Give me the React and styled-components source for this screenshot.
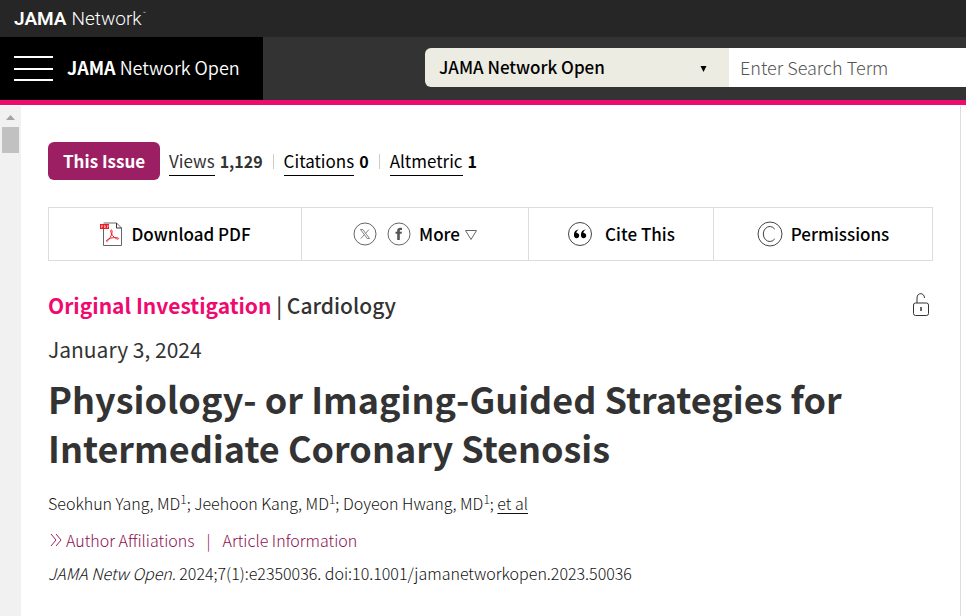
import styled, { createGlobalStyle } from 'styled-components';

const GlobalStyle = createGlobalStyle`
  *,
  *::before,
  *::after {
    box-sizing: border-box;
  }

  body {
    margin: 0;
    background-color: #fff;
    color: #333;
    font-family: 'Noto Sans CJK SC', 'Open Sans', sans-serif;
    font-size: 17px;
  }

  button,
  input,
  select {
    font-family: inherit;
  }

  a {
    color: inherit;
    text-decoration: none;
  }
`;

const Page = styled.div`
  min-height: 100vh;
  display: flex;
  flex-direction: column;
`;

const TopBar = styled.div`
  height: 37px;
  padding: 0 14px;
  display: flex;
  align-items: center;
  background-color: #262626;
`;

const Logo = styled.a`
  display: flex;
  align-items: flex-start;
  gap: 5px;
  color: #fff;
  font-family: Roboto, Arial, sans-serif;
  font-size: 19px;
  font-weight: 300;
  line-height: 22px;

  & b {
    font-weight: 600;
  }

  & small {
    margin-left: -4px;
    font-size: 5px;
    line-height: 10px;
  }
`;

const NavBar = styled.header`
  display: flex;
  height: 68px;
  background-color: #333;
  border-bottom: 5px solid #ef0a6f;
`;

const Brand = styled.div`
  flex: 0 0 263px;
  display: flex;
  align-items: center;
  gap: 14px;
  padding: 0 14px;
  background-color: #000;
  color: #fff;
  font-size: 18px;
`;

const BrandLink = styled.a`
  padding-bottom: 4px;
  font-weight: 350;

  & b {
    font-weight: 700;
  }
`;

const MenuButton = styled.button`
  display: flex;
  flex-direction: column;
  justify-content: space-between;
  width: 39px;
  height: 25px;
  padding: 0;
  border: none;
  background: none;
  cursor: pointer;

  & span {
    height: 2px;
    background-color: #fff;
  }
`;

const Search = styled.form`
  flex: 1;
  display: flex;
  align-items: center;
  margin-left: 162px;
  padding-bottom: 2px;
`;

const SelectBox = styled.div`
  flex: 0 0 304px;
  display: grid;
  align-items: center;
  height: 39px;
  border-radius: 6px 0 0 6px;
  background-color: #edece2;

  & > * {
    grid-area: 1 / 1;
  }

  & svg {
    justify-self: end;
    margin: 3px 22px 0 0;
    pointer-events: none;
  }
`;

const Select = styled.select`
  width: 100%;
  height: 39px;
  padding: 0 14px 2px;
  appearance: none;
  border: none;
  background: none;
  color: #000;
  font-size: 17px;
  font-weight: 500;
`;

const SearchInput = styled.input`
  flex: 1;
  min-width: 0;
  height: 39px;
  padding: 0 11px 2px;
  border: none;
  border-radius: 0;
  background-color: #fff;
  font-size: 18px;
  font-weight: 300;

  &::placeholder {
    color: #555;
    opacity: 1;
  }
`;

const Body = styled.div`
  flex: 1;
  display: flex;
  padding: 1px 5px 0 0;
`;

const ScrollTrack = styled.div`
  flex: 0 0 21px;
  display: flex;
  flex-direction: column;
  align-items: center;
  gap: 7px;
  padding-top: 9px;
  background-color: #f1f1f1;
`;

const ScrollThumb = styled.div`
  width: 17px;
  height: 26px;
  background-color: #c1c1c1;
`;

const Article = styled.main`
  flex: 1;
  min-width: 0;
  padding: 36px 27px 0;
  border-right: 1px solid #dcdcdc;
`;

const Metrics = styled.div`
  display: flex;
  align-items: center;
  color: #000;
`;

const IssueButton = styled.button`
  height: 38px;
  margin-right: 9px;
  padding: 0 15px 2px;
  border: none;
  border-radius: 6px;
  background-color: #9d1f63;
  color: #fff;
  font-size: 17px;
  font-weight: 700;
  cursor: pointer;
`;

const Metric = styled.span`
  display: flex;
  gap: 5px;
  line-height: 28px;
  color: ${(props) => props.$color || '#000'};

  & a {
    border-bottom: 1px solid #000;
  }

  & b {
    font-size: 16px;
  }
`;

const Divider = styled.span`
  width: 1px;
  height: 15px;
  margin: 0 10px;
  background-color: #ccc;
`;

const Tools = styled.nav`
  display: grid;
  grid-template-columns: 252fr 227fr 185fr 219fr;
  height: 54px;
  margin-top: 27px;
  border: 1px solid #dcdcdc;
`;

const Tool = styled.div`
  display: flex;
  align-items: center;
  justify-content: center;
  gap: 8px;
  color: #000;
  font-weight: 500;

  & + & {
    border-left: 1px solid #dcdcdc;
  }
`;

const SocialLinks = styled.div`
  display: flex;
  gap: 10px;
`;

const ToolLink = styled.a`
  display: flex;
  align-items: center;
  gap: ${(props) => props.$gap || 8}px;

  & span {
    padding-bottom: 2px;
  }
`;

const TypeRow = styled.div`
  display: flex;
  justify-content: space-between;
  align-items: center;
  margin-top: 28px;
  padding-right: 3px;
`;

const ArticleType = styled.div`
  font-size: 21px;
  line-height: 32px;
  font-weight: 500;

  & strong {
    color: #ef0a6f;
    font-weight: 700;
  }
`;

const PubDate = styled.p`
  margin: 12px 0 0;
  font-size: 21px;
  line-height: 32px;
`;

const Title = styled.h1`
  margin: 9px 0 0;
  font-size: 36px;
  line-height: 49px;
  font-weight: 700;
`;

const Authors = styled.p`
  margin: 19px 0 0;
  color: #111;
  font-size: 16px;
  font-weight: 300;
  line-height: 24px;

  & sup {
    font-size: 12px;
    line-height: 0;
  }

  & a {
    text-decoration: underline;
    text-underline-offset: 3px;
  }
`;

const InfoLinks = styled.div`
  display: flex;
  align-items: center;
  gap: 12px;
  margin-top: 13px;
  font-size: 16px;
  font-weight: 300;
  line-height: 24px;
  color: #8c0f52;

  & a {
    display: flex;
    align-items: center;
    gap: 3px;
  }
`;

const Citation = styled.p`
  margin: 9px 0 0;
  color: #111;
  font-size: 16px;
  font-weight: 300;
  line-height: 24px;
`;

const PdfIcon = () => (
  <svg width="24" height="24" viewBox="0 0 24 24" fill="none">
    <path d="M4.5 6v17.5h18V6l-5-5h-13" stroke="#666" />
    <path d="M17.5 1v5h5" stroke="#333" />
    <rect x="1" y="2" width="9" height="5" fill="#ed1c24" />
    <path
      d="M2.5 6V3.5h1v1h-1M5.5 6V3.5h.5l.5.5v1.5h-1M8.5 6V3.5h1M8.5 4.5h1"
      stroke="#fff"
      strokeWidth=".5"
    />
    <path
      d="M12.5 8c1 0 .7 2.500.2 4-.7 2.300-2.200 5-3.700 6.600-.8.900-1.900 1-1.500 0 .6-1.500 4.500-3 8.500-3 2.500 0 4 .5 3.500 1.200-.7.900-3-.3-4.500-1.700-1.800-1.700-3.300-4.600-3.300-6.100 0-.6.300-1 .8-1z"
      stroke="#ed1c24"
    />
  </svg>
);

const XIcon = () => (
  <svg width="24" height="24" viewBox="0 0 24 24" fill="none" stroke="#666">
    <circle cx="12" cy="12" r="11" />
    <path
      d="M7.5 7.5h2.300l6.700 9h-2.300zM16 7.500l-3.500 3.800M7.800 16.500l3.600-4"
      strokeWidth=".8"
    />
  </svg>
);

const FacebookIcon = () => (
  <svg width="24" height="24" viewBox="0 0 24 24">
    <circle cx="12" cy="12" r="11" fill="none" stroke="#666" />
    <path
      d="M10.200 18v-6.200H8.500V9.700h1.700V8.600c0-2 1-2.900 3-2.900.8 0 1.400.1 1.800.2V8h-1.100c-.8 0-1.100.3-1.100.9v.8h2.100l-.3 2.100h-1.800V18z"
      fill="#555"
    />
  </svg>
);

const QuoteIcon = () => (
  <svg width="26" height="26" viewBox="0 0 26 26">
    <circle cx="13" cy="13" r="11.500" fill="none" stroke="#444" />
    <path
      d="M12 8.500c-1.800.8-2.600 1.900-2.500 3.500 1.600-.1 2.700.9 2.700 2.500s-1.100 2.700-2.700 2.700-2.600-1.200-2.600-3.200c0-3.200 1.800-5.300 5.100-5.500zM19 8.500c-1.800.8-2.600 1.900-2.500 3.500 1.600-.1 2.700.9 2.700 2.500s-1.100 2.700-2.700 2.700-2.600-1.200-2.600-3.200c0-3.200 1.800-5.300 5.100-5.500z"
      fill="#000"
    />
  </svg>
);

const CopyrightIcon = () => (
  <svg width="26" height="26" viewBox="0 0 26 26" fill="none" stroke="#444">
    <circle cx="13" cy="13" r="12" />
    <path d="M17.800 8.200A6.500 7.500 0 1 0 17.800 17.800" />
  </svg>
);

const LockIcon = () => (
  <svg width="18" height="26" viewBox="0 0 18 26" fill="none" stroke="#333">
    <rect x="1.500" y="11" width="15" height="12.500" rx="2" />
    <path d="M5 11V6c0-6 7.500-5.500 7.500 0" />
    <path d="M9 15v4" strokeWidth="1.500" />
  </svg>
);

const App = () => {
  return (
    <>
      <GlobalStyle />
      <Page>
        <TopBar>
          <Logo href="#">
            <b>JAMA</b> Network<small>™</small>
          </Logo>
        </TopBar>

        <NavBar>
          <Brand>
            <MenuButton aria-label="Menu">
              <span />
              <span />
              <span />
            </MenuButton>
            <BrandLink href="#">
              <b>JAMA</b> Network Open
            </BrandLink>
          </Brand>
          <Search>
            <SelectBox>
              <Select aria-label="Journal">
                <option>JAMA Network Open</option>
              </Select>
              <svg width="7" height="6" viewBox="0 0 7 6">
                <path d="M.5 0h6L3.500 6z" />
              </svg>
            </SelectBox>
            <SearchInput placeholder="Enter Search Term" aria-label="Search" />
          </Search>
        </NavBar>

        <Body>
          <ScrollTrack>
            <svg width="9" height="5" viewBox="0 0 9 5">
              <path d="M0 5h9L4.500 0z" fill="#a3a3a3" />
            </svg>
            <ScrollThumb />
          </ScrollTrack>

          <Article>
            <Metrics>
              <IssueButton>This Issue</IssueButton>
              <Metric $color="#333">
                <a href="#">Views</a>
                <b>1,129</b>
              </Metric>
              <Divider />
              <Metric>
                <a href="#">Citations</a>
                <b>0</b>
              </Metric>
              <Divider />
              <Metric>
                <a href="#">Altmetric</a>
                <b>1</b>
              </Metric>
            </Metrics>

            <Tools>
              <Tool>
                <ToolLink href="#">
                  <PdfIcon />
                  <span>Download PDF</span>
                </ToolLink>
              </Tool>
              <Tool>
                <SocialLinks>
                  <ToolLink href="#" aria-label="X">
                    <XIcon />
                  </ToolLink>
                  <ToolLink href="#" aria-label="Facebook">
                    <FacebookIcon />
                  </ToolLink>
                </SocialLinks>
                <ToolLink href="#" $gap={5}>
                  <span>More</span>
                  <svg width="12" height="12" viewBox="0 0 12 12" fill="none">
                    <path d="M.5 2.500h11L6 11.500z" stroke="#666" />
                  </svg>
                </ToolLink>
              </Tool>
              <Tool>
                <ToolLink href="#" $gap={12}>
                  <QuoteIcon />
                  <span>Cite This</span>
                </ToolLink>
              </Tool>
              <Tool>
                <ToolLink href="#">
                  <CopyrightIcon />
                  <span>Permissions</span>
                </ToolLink>
              </Tool>
            </Tools>

            <TypeRow>
              <ArticleType>
                <strong>Original Investigation</strong> | Cardiology
              </ArticleType>
              <LockIcon />
            </TypeRow>
            <PubDate>January 3, 2024</PubDate>
            <Title>
              Physiology- or Imaging-Guided Strategies for Intermediate Coronary
              Stenosis
            </Title>
            <Authors>
              Seokhun Yang, MD<sup>1</sup>; Jeehoon Kang, MD<sup>1</sup>; Doyeon
              Hwang, MD<sup>1</sup>; <a href="#">et al</a>
            </Authors>
            <InfoLinks>
              <a href="#">
                <svg width="15" height="14" viewBox="0 0 15 14" fill="none">
                  <path d="M3 1l5 6-5 6M8 1l5 6-5 6" stroke="#9d1f63" />
                </svg>
                Author Affiliations
              </a>
              <span>|</span>
              <a href="#">Article Information</a>
            </InfoLinks>
            <Citation>
              <em>JAMA Netw Open.</em> 2024;7(1):e2350036.
              doi:10.1001/jamanetworkopen.2023.50036
            </Citation>
          </Article>
        </Body>
      </Page>
    </>
  );
};

export default App;
